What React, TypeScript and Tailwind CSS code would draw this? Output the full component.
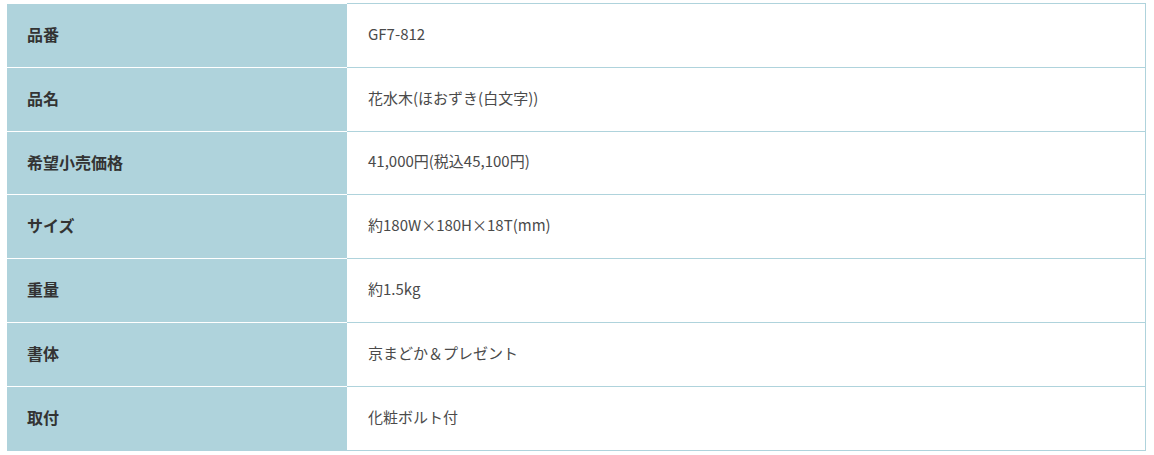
const SPECS = [
  { label: '品番', value: 'GF7-812' },
  { label: '品名', value: '花水木(ほおずき(白文字))' },
  { label: '希望小売価格', value: '41,000円(税込45,100円)' },
  { label: 'サイズ', value: '約180W×180H×18T(mm)' },
  { label: '重量', value: '約1.5kg' },
  { label: '書体', value: '京まどか＆プレゼント' },
  { label: '取付', value: '化粧ボルト付' },
];

export default function App() {
  return (
    <div
      className="min-h-screen bg-white pl-[7px] pr-[8px] pt-[3px]"
      style={{ fontFamily: '"Noto Sans CJK JP", "Noto Sans", sans-serif' }}
    >
      <div className="flex flex-col">
        {SPECS.map((row, i) => (
          <div key={row.label} className={`flex ${i === 2 ? 'h-[63px]' : 'h-[64px]'}`}>
            {/* label cell */}
            <div className="flex w-[340px] shrink-0 items-center border-t border-white bg-[#afd3dc] pb-[3px] pl-[20px] text-[16px] font-bold text-[#333]">
              {row.label}
            </div>
            {/* value cell */}
            <div className="flex flex-1 items-center border-t border-r border-[#afd3dc] pb-[3px] pl-[21px] text-[15px] text-[#4a4a4a]">
              {row.value}
            </div>
          </div>
        ))}
        <div className="flex h-px">
          <div className="w-[340px] shrink-0 bg-[#afd3dc]" />
          <div className="flex-1 bg-[#afd3dc]" />
        </div>
      </div>
    </div>
  );
}
